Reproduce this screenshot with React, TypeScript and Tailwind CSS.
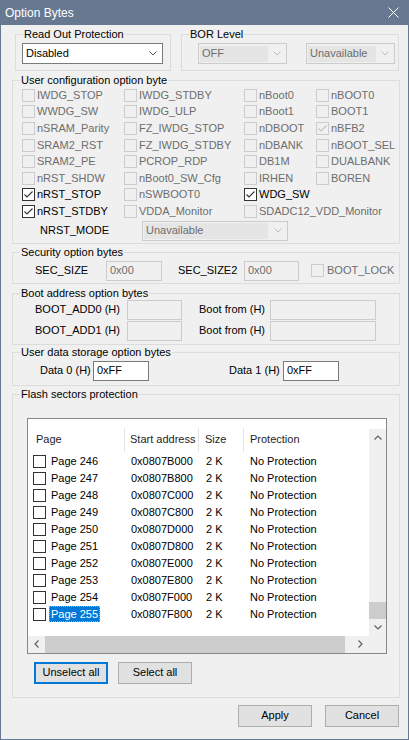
import React from 'react';

const font = "font-['Liberation_Sans',Arial,sans-serif]";

function Check({ checked = false, disabled = false }: { checked?: boolean; disabled?: boolean }) {
  return (
    <span
      className={`flex h-[13px] w-[13px] shrink-0 items-center justify-center border ${
        disabled ? 'border-[#cccccc] bg-[#f0f0f0]' : 'border-[#333333] bg-white'
      }`}
    >
      {checked && (
        <svg width="11" height="11" viewBox="0 0 11 11">
          <polyline points="1.5,5.5 4,8 9.5,2.5" fill="none" stroke={disabled ? '#c4c4c4' : '#333333'} strokeWidth="1.1" />
        </svg>
      )}
    </span>
  );
}

function CheckItem({ label, checked = false, disabled = true, className = '' }: { label: string; checked?: boolean; disabled?: boolean; className?: string }) {
  return (
    <div className={`flex items-center gap-[2px] whitespace-nowrap ${disabled ? 'text-[#6d6d6d]' : 'text-black'} ${className}`}>
      <Check checked={checked} disabled={disabled} />
      <span>{label}</span>
    </div>
  );
}

function Chevron({ color }: { color: string }) {
  return (
    <svg width="8" height="5" viewBox="0 0 8 5" className="ml-auto mr-[5px] shrink-0">
      <polyline points="0.5,0.5 4,4 7.5,0.5" fill="none" stroke={color} strokeWidth="1" />
    </svg>
  );
}

function GroupBox({ title, className = '', children }: { title: string; className?: string; children?: React.ReactNode }) {
  return (
    <fieldset className={`border border-[#dcdcdc] ${className}`}>
      <legend className="ml-[7px] px-[1px] text-[11px] leading-[13px] text-black">{title}</legend>
      {children}
    </fieldset>
  );
}

function TextBox({ value = '', disabled = true, className = '' }: { value?: string; disabled?: boolean; className?: string }) {
  return (
    <div
      className={`flex h-[20px] shrink-0 items-center border pl-[3px] ${
        disabled ? 'border-[#cccccc] bg-[#f0f0f0] text-[#6d6d6d]' : 'border-[#7a7a7a] bg-white text-black'
      } ${className}`}
    >
      {value}
    </div>
  );
}

function Btn({ label, focused = false, className = '' }: { label: string; focused?: boolean; className?: string }) {
  return (
    <div
      className={`flex h-[22px] w-[74px] items-center justify-center bg-[#e1e1e1] text-black ${
        focused ? 'border-2 border-[#0078d7]' : 'border border-[#adadad]'
      } ${className}`}
    >
      {label}
    </div>
  );
}

type Opt = { label: string; checked?: boolean; disabled?: boolean; span?: boolean };

const configRows: Opt[][] = [
  [{ label: 'IWDG_STOP' }, { label: 'IWDG_STDBY' }, { label: 'nBoot0' }, { label: 'nBOOT0' }],
  [{ label: 'WWDG_SW' }, { label: 'IWDG_ULP' }, { label: 'nBoot1' }, { label: 'BOOT1' }],
  [{ label: 'nSRAM_Parity' }, { label: 'FZ_IWDG_STOP' }, { label: 'nDBOOT' }, { label: 'nBFB2', checked: true }],
  [{ label: 'SRAM2_RST' }, { label: 'FZ_IWDG_STDBY' }, { label: 'nDBANK' }, { label: 'nBOOT_SEL' }],
  [{ label: 'SRAM2_PE' }, { label: 'PCROP_RDP' }, { label: 'DB1M' }, { label: 'DUALBANK' }],
  [{ label: 'nRST_SHDW' }, { label: 'nBoot0_SW_Cfg' }, { label: 'IRHEN' }, { label: 'BOREN' }],
  [{ label: 'nRST_STOP', checked: true, disabled: false }, { label: 'nSWBOOT0' }, { label: 'WDG_SW', checked: true, disabled: false }, { label: '' }],
  [{ label: 'nRST_STDBY', checked: true, disabled: false }, { label: 'VDDA_Monitor' }, { label: 'SDADC12_VDD_Monitor', span: true }],
];

const pages = [246, 247, 248, 249, 250, 251, 252, 253, 254, 255];

function addr(page: number) {
  return '0x' + (0x08000000 + page * 0x800).toString(16).toUpperCase().padStart(8, '0');
}

function FlashList() {
  return (
    <div className="ml-[14px] flex h-[236px] w-[360px] border border-[#828790] bg-white">
      <div className="flex w-[341px] flex-col">
        <div className="h-[34px] pt-[9px]">
          <div className="flex h-[24px] items-center text-[#1e1e1e]">
            <div className="flex h-full w-[97px] items-center border-r border-[#e5e5e5] pl-[8px]">Page</div>
            <div className="flex h-full w-[74px] items-center border-r border-[#e5e5e5] pl-[5px]">Start address</div>
            <div className="flex h-full w-[45px] items-center border-r border-[#e5e5e5] pl-[6px]">Size</div>
            <div className="flex h-full flex-1 items-center pl-[6px]">Protection</div>
          </div>
        </div>
        {pages.map((p) => (
          <div key={p} className="flex h-[17px] items-center whitespace-nowrap text-black">
            <div className="flex w-[97px] items-center pl-[5px]">
              <Check />
              <span
                className={`ml-[3px] px-[2px] leading-[16px] ${
                  p === 255 ? 'bg-[#0078d7] text-white outline-1 outline-dotted outline-[#e9a33c] -outline-offset-1' : ''
                }`}
              >
                Page {p}
              </span>
            </div>
            <div className="w-[74px] pl-[6px]">{addr(p)}</div>
            <div className="w-[45px] pl-[7px]">2 K</div>
            <div className="flex-1 pl-[6px]">No Protection</div>
          </div>
        ))}
        <div className="flex-1" />
        <div className="flex h-[17px] items-center bg-[#f0f0f0]">
          <div className="flex h-full w-[17px] items-center justify-center">
            <svg width="5" height="8" viewBox="0 0 5 8">
              <polyline points="4.5,0.5 1,4 4.5,7.5" fill="none" stroke="#606060" strokeWidth="1.2" />
            </svg>
          </div>
          <div className="h-full w-[300px] bg-[#cdcdcd]" />
          <div className="flex-1" />
          <div className="flex h-full w-[17px] items-center justify-center">
            <svg width="5" height="8" viewBox="0 0 5 8">
              <polyline points="0.5,0.5 4,4 0.5,7.5" fill="none" stroke="#606060" strokeWidth="1.2" />
            </svg>
          </div>
        </div>
      </div>
      <div className="flex w-[17px] flex-col">
        <div className="h-[10px]" />
        <div className="flex h-[17px] items-center justify-center bg-[#f0f0f0]">
          <svg width="8" height="5" viewBox="0 0 8 5">
            <polyline points="0.5,4.5 4,1 7.5,4.5" fill="none" stroke="#606060" strokeWidth="1.2" />
          </svg>
        </div>
        <div className="flex-1 bg-[#f0f0f0]" />
        <div className="h-[17px] bg-[#cdcdcd]" />
        <div className="flex h-[17px] items-center justify-center bg-[#f0f0f0]">
          <svg width="8" height="5" viewBox="0 0 8 5">
            <polyline points="0.5,0.5 4,4 7.5,0.5" fill="none" stroke="#606060" strokeWidth="1.2" />
          </svg>
        </div>
        <div className="h-[17px] bg-[#f0f0f0]" />
      </div>
    </div>
  );
}

export default function App() {
  return (
    <div className={`flex h-[740px] w-[409px] flex-col bg-[#677891] px-[1px] pb-[1px] ${font}`}>
      <div className="flex h-[25px] shrink-0 items-center justify-between pl-[4px] pr-[9px] text-[12px] text-white">
        <span>Option Bytes</span>
        <svg width="11" height="11" viewBox="0 0 11 11">
          <line x1="0.5" y1="0.5" x2="10.5" y2="10.5" stroke="white" strokeWidth="1" />
          <line x1="10.5" y1="0.5" x2="0.5" y2="10.5" stroke="white" strokeWidth="1" />
        </svg>
      </div>

      <div className="flex flex-1 flex-col bg-[#f0f0f0] text-[11px] leading-[13px] text-black">
        {/* top combos */}
        <div className="ml-[14px] mt-[3px] flex gap-[10px]">
          <GroupBox title="Read Out Protection" className="w-[156px] pb-[6px] pt-[2px]">
            <div className="ml-[6px] flex h-[21px] w-[141px] items-center border border-[#7a7a7a] bg-white">
              <span className="pl-[3px]">Disabled</span>
              <Chevron color="#555555" />
            </div>
          </GroupBox>
          <GroupBox title="BOR Level" className="w-[218px] pb-[6px] pt-[2px]">
            <div className="ml-[16px] flex gap-[19px]">
              <div className="flex h-[21px] w-[89px] items-center border border-[#cccccc] bg-[#f0f0f0]">
                <span className="ml-[1px] flex h-[16px] w-[68px] items-center bg-[#e5e5e5] pl-[2px] text-[#6d6d6d]">OFF</span>
                <Chevron color="#bcbcbc" />
              </div>
              <div className="flex h-[21px] w-[89px] items-center border border-[#cccccc] bg-[#f0f0f0]">
                <span className="ml-[1px] flex h-[16px] w-[68px] items-center bg-[#e5e5e5] pl-[2px] text-[#6d6d6d]">Unavailable</span>
                <Chevron color="#bcbcbc" />
              </div>
            </div>
          </GroupBox>
        </div>

        {/* user configuration */}
        <GroupBox title="User configuration option byte" className="ml-[11px] mt-[3px] w-[388px] pb-[2px]">
          <div className="grid auto-rows-[16.6px] grid-cols-[102px_120px_72px_1fr] items-center pl-[9px]">
            {configRows.map((row, r) =>
              row.map((c, i) =>
                c.label ? (
                  <CheckItem
                    key={r + '-' + i}
                    label={c.label}
                    checked={c.checked}
                    disabled={c.disabled ?? true}
                    className={c.span ? 'col-span-2' : ''}
                  />
                ) : (
                  <div key={r + '-' + i} />
                )
              )
            )}
          </div>
          <div className="mt-[1px] flex h-[20px] items-center">
            <span className="w-[129px] pl-[27px]">NRST_MODE</span>
            <div className="flex h-[20px] w-[146px] items-center border border-[#cccccc] bg-[#f0f0f0]">
              <span className="ml-[1px] flex h-[16px] w-[124px] items-center bg-[#e5e5e5] pl-[2px] text-[#6d6d6d]">Unavailable</span>
              <Chevron color="#bcbcbc" />
            </div>
          </div>
        </GroupBox>

        {/* security */}
        <GroupBox title="Security option bytes" className="ml-[11px] mt-[2px] w-[388px] pb-[2px] pt-[2px]">
          <div className="flex h-[20px] items-center">
            <span className="w-[93px] pl-[22px]">SEC_SIZE</span>
            <TextBox value="0x00" className="w-[56px]" />
            <span className="ml-[16px] w-[66px]">SEC_SIZE2</span>
            <TextBox value="0x00" className="w-[55px]" />
            <CheckItem label="BOOT_LOCK" className="ml-[12px] gap-[3px]" />
          </div>
        </GroupBox>

        {/* boot address */}
        <GroupBox title="Boot address option bytes" className="ml-[11px] mt-[3px] w-[388px] pb-[3px]">
          <div className="flex flex-col gap-[1px]">
            {['BOOT_ADD0 (H)', 'BOOT_ADD1 (H)'].map((l) => (
              <div key={l} className="flex h-[20px] items-center">
                <span className="w-[114px] pl-[22px]">{l}</span>
                <TextBox className="w-[55px]" />
                <span className="ml-[17px] w-[71px]">Boot from (H)</span>
                <TextBox className="w-[106px]" />
              </div>
            ))}
          </div>
        </GroupBox>

        {/* user data */}
        <GroupBox title="User data storage option bytes" className="ml-[11px] mt-[1px] w-[388px] pb-[4px] pt-[2px]">
          <div className="flex h-[20px] items-center">
            <span className="w-[80px] pl-[27px]">Data 0 (H)</span>
            <TextBox value="0xFF" disabled={false} className="w-[56px]" />
            <span className="ml-[80px] w-[54px]">Data 1 (H)</span>
            <TextBox value="0xFF" disabled={false} className="w-[56px]" />
          </div>
        </GroupBox>

        {/* flash sectors */}
        <GroupBox title="Flash sectors protection" className="ml-[11px] mt-[2px] w-[388px] pb-[13px] pt-[17px]">
          <FlashList />
          <div className="mt-[8px] flex gap-[10px] pl-[21px]">
            <Btn label="Unselect all" focused />
            <Btn label="Select all" />
          </div>
        </GroupBox>

        <div className="mt-[7px] flex justify-end gap-[13px] pr-[9px]">
          <Btn label="Apply" />
          <Btn label="Cancel" />
        </div>
      </div>
    </div>
  );
}
